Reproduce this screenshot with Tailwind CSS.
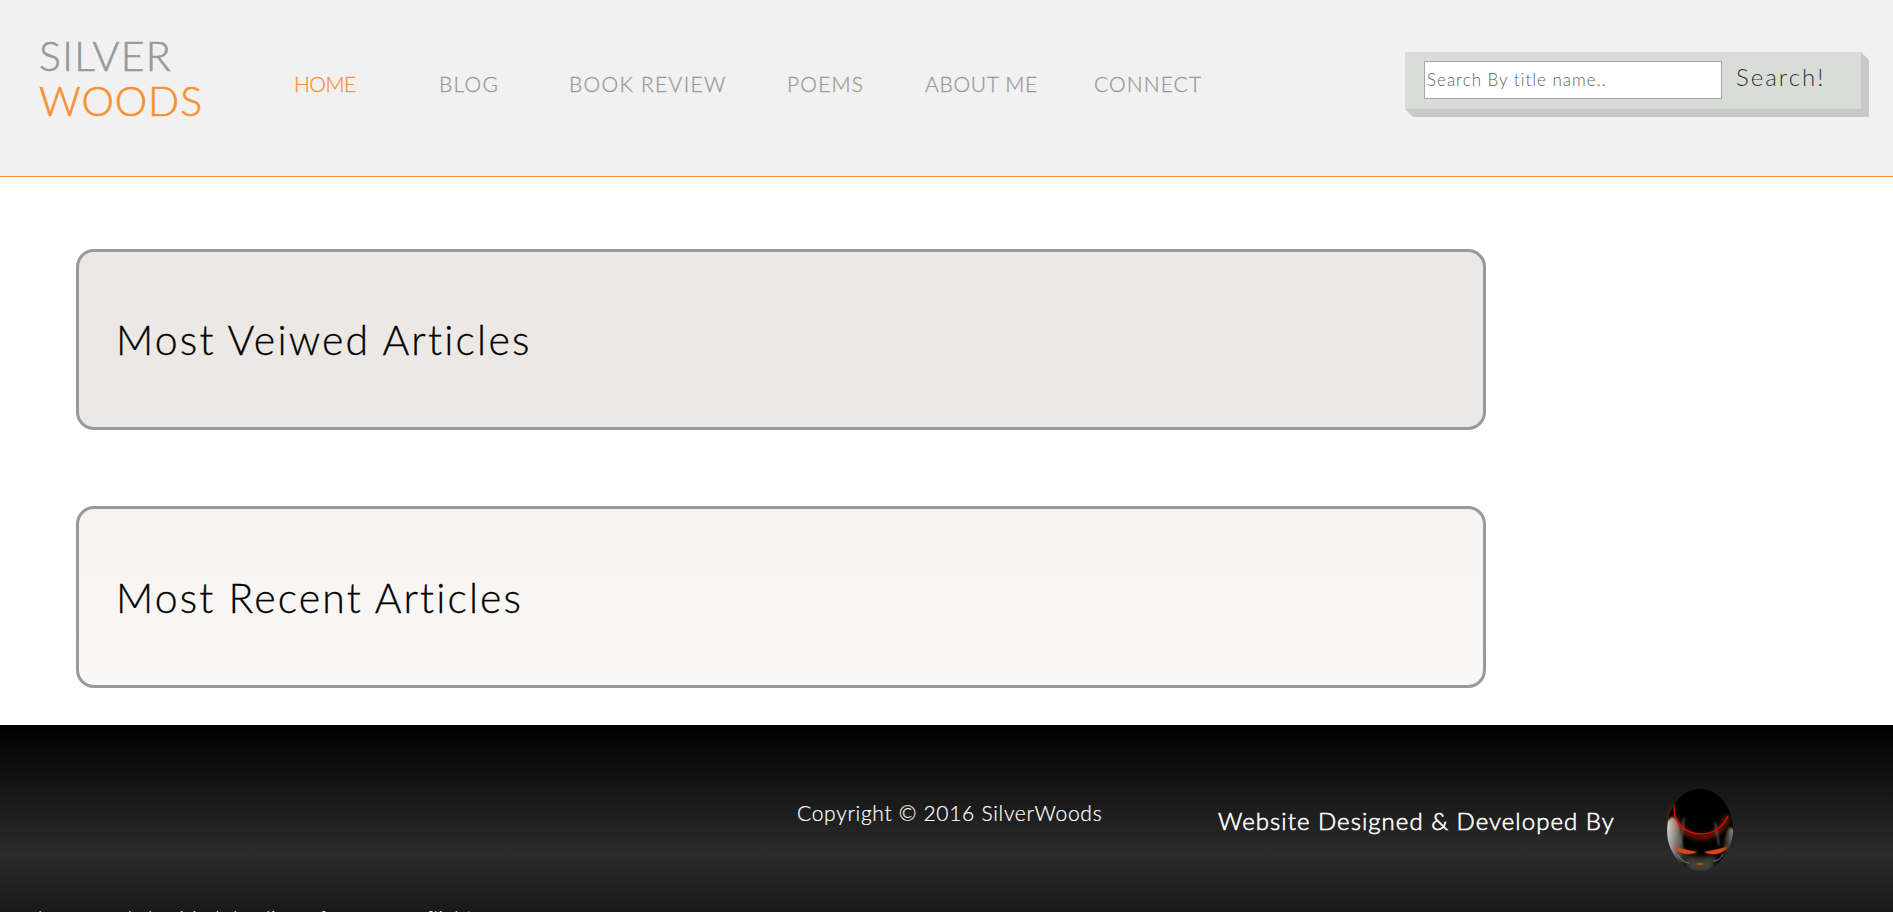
<!DOCTYPE html>
<html lang="en">
<head>
<meta charset="utf-8">
<title>Silver Woods</title>
<script src="https://cdn.jsdelivr.net/npm/@tailwindcss/browser@4"></script>
</head>
<body class="flex h-[912px] flex-col overflow-hidden bg-white font-['Lato',sans-serif] font-light text-black">
<header class="flex h-[177px] shrink-0 items-start border-b border-[#f99133] bg-[#f1f1f1] text-[#999]">
  <div class="ml-[39px] mt-[33px] w-[255px] text-[41px] leading-[45px] [-webkit-text-stroke:0.6px_currentColor]">
    <div class="tracking-[1.3px]">SILVER</div>
    <div class="tracking-[0.9px] text-[#f99133]">WOODS</div>
  </div>
  <nav class="mt-[72px] flex text-[21px] leading-6 whitespace-nowrap [-webkit-text-stroke:0.3px_currentColor]">
    <a class="w-[145px] tracking-[-0.5px] text-[#f99133]">HOME</a>
    <a class="w-[130px] tracking-[1.3px]">BLOG</a>
    <a class="w-[218px] tracking-[1.3px]">BOOK REVIEW</a>
    <a class="w-[138px] tracking-[1.2px]">POEMS</a>
    <a class="w-[169px] tracking-[0.7px]">ABOUT ME</a>
    <a class="w-[311px] tracking-[1.1px]">CONNECT</a>
  </nav>
  <form class="relative mt-[52px] h-[65px] w-[464px]">
    <svg class="absolute inset-0" width="464" height="65" viewBox="0 0 464 65"><path d="M456 0L464 8V65H8L0 57Z" fill="#c7c9c6"/><path d="M0 0H456V57H0Z" fill="#dadcd9"/></svg>
    <div class="relative flex pl-[19px] pt-[9px]">
      <div class="h-[38px] w-[298px] border border-[#a5a7a5] bg-white pl-[2px] text-[17px] leading-[36px] tracking-[1px] text-[#606060]">Search By title name..</div>
      <button type="button" class="ml-[14px] h-[32px] text-[24px] leading-[30px] tracking-[2px] text-[#333]">Search!</button>
    </div>
  </form>
</header>
<main class="flex h-[548px] shrink-0 flex-col gap-[76px] pl-[76px] pt-[72px]">
  <section class="h-[181px] w-[1410px] rounded-[18px] border-[3px] border-[#999] bg-[#ece8e5] pl-[37px] pt-[58px]">
    <h2 class="text-[41px] leading-[60px] tracking-[2.2px] [-webkit-text-stroke:0.3px_currentColor]">Most Veiwed Articles</h2>
  </section>
  <section class="h-[182px] w-[1410px] rounded-[18px] border-[3px] border-[#999] bg-linear-to-b from-[#f5f4f2] to-[#faf9f8] pl-[37px] pt-[59px]">
    <h2 class="text-[41px] leading-[60px] tracking-[2.1px] [-webkit-text-stroke:0.3px_currentColor]">Most Recent Articles</h2>
  </section>
</main>
<footer class="relative flex h-[187px] shrink-0 items-start overflow-hidden bg-[linear-gradient(to_bottom,#000_0%,#141414_32%,#2b2b2b_69%,#191919_100%)] text-white">
  <p class="ml-[797px] mt-[73px] w-[421px] text-[21px] leading-[30px] tracking-[0.7px] [-webkit-text-stroke:0.2px_currentColor]">Copyright © 2016 SilverWoods</p>
  <p class="mt-[81px] w-[448px] text-[24px] leading-[30px] tracking-[1.04px] [-webkit-text-stroke:0.6px_currentColor]">Website Designed &amp; Developed By</p>
  <svg class="mt-[63px]" width="68" height="84" viewBox="0 0 68 84">
    <defs>
      <radialGradient id="shell" cx=".5" cy=".35" r=".65"><stop offset=".6" stop-color="#000"/><stop offset="1" stop-color="#10110e"/></radialGradient>
      <linearGradient id="shine" x1="0" y1="0" x2="1" y2=".35"><stop stop-color="#e8e2dc"/><stop offset=".45" stop-color="#8a8782"/><stop offset="1" stop-color="#0a0a0a"/></linearGradient>
      <linearGradient id="shineR" x1="1" y1="0" x2="0" y2=".2"><stop stop-color="#c9b8ae"/><stop offset="1" stop-color="#111" stop-opacity="0"/></linearGradient>
      <filter id="soft" x="-30%" y="-30%" width="160%" height="160%"><feGaussianBlur stdDeviation="1"/></filter>
      <filter id="glow" x="-40%" y="-60%" width="180%" height="220%"><feGaussianBlur stdDeviation="2.6"/></filter>
      <clipPath id="head"><path d="M34 1C53 1 67 19 67 42C67 63 51 83 34 83C17 83 1 65 1 43C1 20 15 1 34 1Z"/></clipPath>
    </defs>
    <path d="M8 18C4 25 3 31 2 38" fill="none" stroke="#b52a05" stroke-width="3" opacity=".6" filter="url(#glow)"/>
    <g clip-path="url(#head)">
      <path d="M0 0H68V84H0Z" fill="url(#shell)"/>
      <path d="M6 29Q13 30 15 46Q16 59 25 75L19 81L0 62V34Z" fill="url(#shine)" filter="url(#soft)"/>
      <path d="M63 39Q58 49 58 60L49 78L61 69L70 42Z" fill="url(#shineR)" filter="url(#soft)"/>
      <path d="M19 67Q34 73 50 67L46 84H22Z" fill="#4d5141" opacity=".8" filter="url(#glow)"/>
      <path d="M8 29Q18 49 35 49Q54 49 62 28" fill="none" stroke="#d63b0b" stroke-width="5" opacity=".55" filter="url(#glow)"/>
      <path d="M18 30L15 56M49 34L53 57" stroke="#aaa" stroke-width="1.4" opacity=".6" filter="url(#soft)"/>
      <path d="M8 15C6 35 20 46 35 46Q53 46 62 28" fill="none" stroke="#e00805" stroke-width="1.4"/>
      <path d="M9 58Q16 66 31 64M61 58Q54 66 39 64" fill="none" stroke="#ff3b08" stroke-width="3" opacity=".4" filter="url(#soft)"/>
      <path d="M9 59Q22 62 31 64Q22 68 16 65Q11 63 9 59ZM61 59Q48 62 38 64Q47 68 54 65Q59 63 61 59Z" fill="#d9441a"/>
      <path d="M30 76L34 75L39 76L34 77Z" fill="#df4a18"/>
      <path d="M47 73Q54 73 57 66M12 67Q16 74 23 75" fill="none" stroke="#aaa" stroke-width="1" opacity=".6"/>
    </g>
  </svg>
  <p class="absolute left-[38px] top-[177px] flex text-[20px] leading-[30px] tracking-[0.6px] whitespace-nowrap"><span class="w-[49px]">know</span><span class="w-[61px]">&nbsp;work</span><span class="w-[31px]">by.</span><span class="w-[54px]">Mark</span><span class="w-[86px]">leading</span><span class="w-[107px]">for a new</span><span>flight</span></p>
</footer>
</body>
</html>
